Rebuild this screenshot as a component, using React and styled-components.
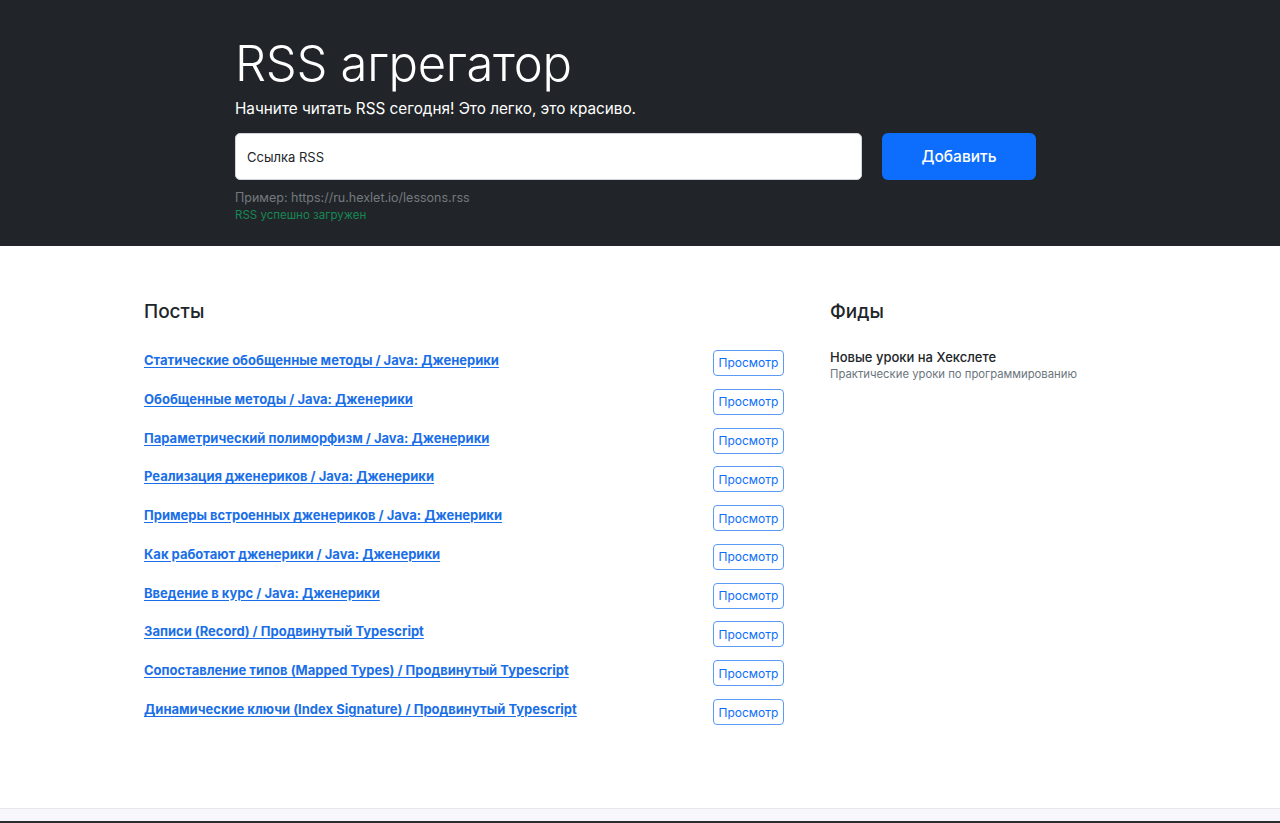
import React from "react";
import styled, { createGlobalStyle } from "styled-components";

const GlobalStyle = createGlobalStyle`
  html, body {
    margin: 0;
    padding: 0;
    background: #ffffff;
    font-family: Inter, "Noto Sans", "Liberation Sans", sans-serif;
    color: #212529;
    overflow: hidden;
  }
  * { box-sizing: border-box; }
`;

// Dark top section with the form
const Hero = styled.section`
  background-color: #212529;
  height: 246px;
  padding-top: 36px;
`;

const HeroInner = styled.div`
  width: 810px;
  margin-left: 235px;
`;

const Title = styled.h1`
  margin: 0;
  font-size: 49px;
  font-weight: 300;
  line-height: 56px;
  color: #ffffff;
  letter-spacing: -0.3px;
`;

const Lead = styled.p`
  margin: 5px 0 0;
  font-size: 15.3px;
  line-height: 24px;
  color: #ffffff;
`;

const Form = styled.form`
  display: flex;
  gap: 20px;
  margin-top: 12px;
`;

const UrlInput = styled.input`
  width: 627px;
  height: 47px;
  padding: 0 11px;
  border: 1px solid #ced4da;
  border-radius: 5px;
  background: #ffffff;
  font-family: inherit;
  font-size: 13px;
  color: #212529;

  &::placeholder {
    color: #212529;
  }
`;

const AddButton = styled.button`
  width: 154px;
  height: 47px;
  border: none;
  border-radius: 6px;
  background-color: #0d6efd;
  color: #ffffff;
  font-family: inherit;
  font-size: 15.5px;
  font-weight: 500;
`;

const Hint = styled.p`
  margin: 8px 0 0;
  font-size: 12.5px;
  line-height: 19px;
  color: #74797f;
`;

const Feedback = styled.p`
  margin: 0;
  font-size: 11.5px;
  line-height: 17px;
  color: #198754;
`;

// Posts and feeds
const Main = styled.main`
  width: 992px;
  margin: 0 auto;
  padding-top: 54px;
  height: 562px;
  display: grid;
  grid-template-columns: 640px 1fr;
  column-gap: 46px;
  align-items: start;
`;

const SectionTitle = styled.h2`
  margin: 0 0 19.6px;
  font-size: 19px;
  line-height: 24px;
  font-weight: 500;
  color: #212529;
`;

const PostList = styled.ul`
  list-style: none;
  margin: 0;
  padding: 0;
`;

const PostItem = styled.li`
  display: flex;
  justify-content: space-between;
  align-items: flex-start;
  padding: 6.4px 0;
`;

const PostLink = styled.a`
  font-size: 13px;
  line-height: 20px;
  font-weight: 700;
  color: #1a6fe8;
  text-decoration: underline;
  text-underline-offset: 2px;
`;

const ViewButton = styled.button`
  width: 71px;
  height: 26px;
  padding: 0;
  border: 1px solid #5b9af5;
  border-radius: 4px;
  background: #ffffff;
  color: #0d6efd;
  font-family: inherit;
  font-size: 12px;
`;

const FeedItem = styled.div`
  padding-top: 4px;
`;

const FeedName = styled.h3`
  margin: 0;
  font-size: 13px;
  line-height: 18px;
  font-weight: 500;
  color: #212529;
`;

const FeedDescription = styled.p`
  margin: 0;
  font-size: 11.3px;
  line-height: 16px;
  color: #6c757d;
`;

const Footer = styled.footer`
  border-top: 1px solid #e6e6ec;
  background-color: #f8f8fc;
  height: 13px;
`;

const FooterEdge = styled.div`
  height: 2px;
  background-color: #2b2d31;
`;

const posts = [
  "Статические обобщенные методы / Java: Дженерики",
  "Обобщенные методы / Java: Дженерики",
  "Параметрический полиморфизм / Java: Дженерики",
  "Реализация дженериков / Java: Дженерики",
  "Примеры встроенных дженериков / Java: Дженерики",
  "Как работают дженерики / Java: Дженерики",
  "Введение в курс / Java: Дженерики",
  "Записи (Record) / Продвинутый Typescript",
  "Сопоставление типов (Mapped Types) / Продвинутый Typescript",
  "Динамические ключи (Index Signature) / Продвинутый Typescript",
];

const App = () => (
  <>
    <GlobalStyle />
    <Hero>
      <HeroInner>
        <Title>RSS агрегатор</Title>
        <Lead>Начните читать RSS сегодня! Это легко, это красиво.</Lead>
        <Form onSubmit={(e) => e.preventDefault()}>
          <UrlInput placeholder="Ссылка RSS" aria-label="url" />
          <AddButton type="submit">Добавить</AddButton>
        </Form>
        <Hint>Пример: https://ru.hexlet.io/lessons.rss</Hint>
        <Feedback>RSS успешно загружен</Feedback>
      </HeroInner>
    </Hero>

    <Main>
      <div>
        <SectionTitle>Посты</SectionTitle>
        <PostList>
          {posts.map((title) => (
            <PostItem key={title}>
              <PostLink href="#">{title}</PostLink>
              <ViewButton type="button">Просмотр</ViewButton>
            </PostItem>
          ))}
        </PostList>
      </div>
      <div>
        <SectionTitle>Фиды</SectionTitle>
        <FeedItem>
          <FeedName>Новые уроки на Хекслете</FeedName>
          <FeedDescription>Практические уроки по программированию</FeedDescription>
        </FeedItem>
      </div>
    </Main>

    <Footer />
    <FooterEdge />
  </>
);

export default App;
